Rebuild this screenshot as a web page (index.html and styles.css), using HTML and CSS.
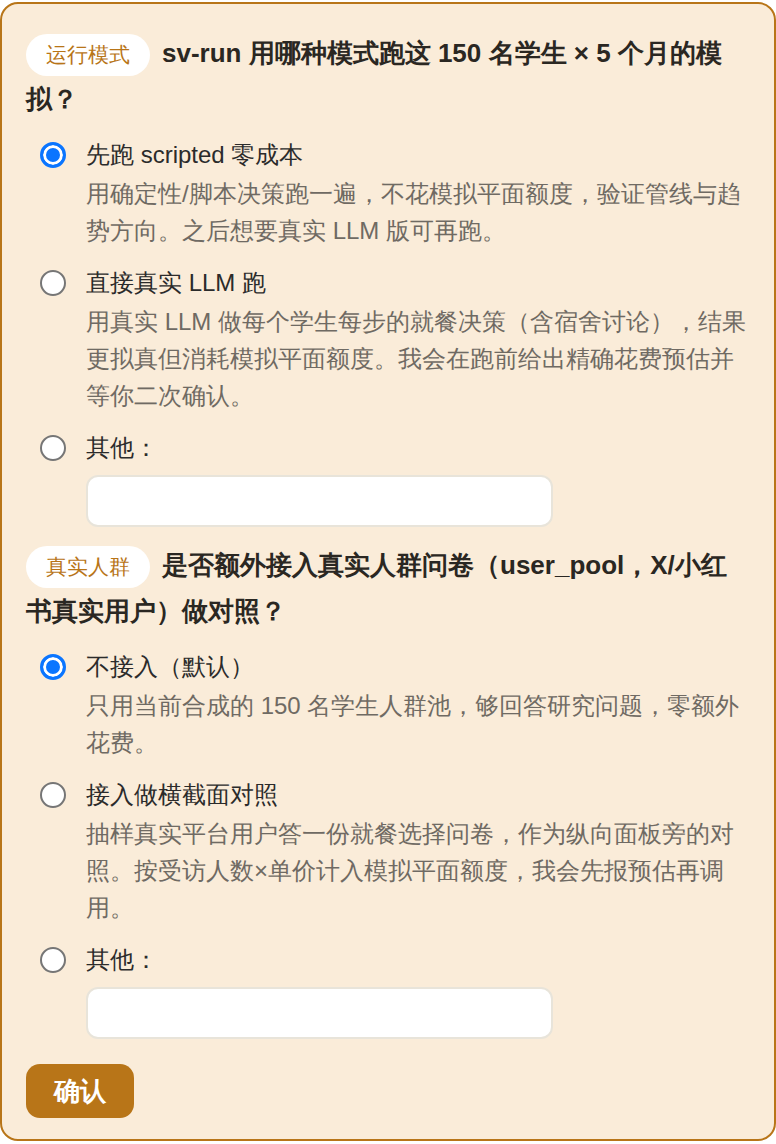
FILE: index.html
```html
<!DOCTYPE html>
<html>
<head>
    <meta charset="UTF-8">
    <meta name="viewport" content="width=device-width, initial-scale=1.0">
    <title>运行确认</title>
    <link rel="stylesheet" href="styles.css">
</head>
<body>

<form class="card">
    <div class="question">
        <h2 class="q-title"><span class="tag">运行模式</span>sv-run 用哪种模式跑这 150 名学生 × 5 个月的模拟？</h2>

        <label class="option">
            <input type="radio" name="mode" value="scripted" checked>
            <span class="opt-body">
                <span class="opt-label">先跑 scripted 零成本</span>
                <span class="opt-desc">用确定性/脚本决策跑一遍，不花模拟平面额度，验证管线与趋势方向。之后想要真实 LLM 版可再跑。</span>
            </span>
        </label>

        <label class="option">
            <input type="radio" name="mode" value="llm">
            <span class="opt-body">
                <span class="opt-label">直接真实 LLM 跑</span>
                <span class="opt-desc">用真实 LLM 做每个学生每步的就餐决策（含宿舍讨论），结果更拟真但消耗模拟平面额度。我会在跑前给出精确花费预估并等你二次确认。</span>
            </span>
        </label>

        <label class="option">
            <input type="radio" name="mode" value="other">
            <span class="opt-body">
                <span class="opt-label">其他：</span>
                <input type="text" class="other-input">
            </span>
        </label>
    </div>

    <div class="question">
        <h2 class="q-title"><span class="tag">真实人群</span>是否额外接入真实人群问卷（user_pool，X/小红书真实用户）做对照？</h2>

        <label class="option">
            <input type="radio" name="pool" value="none" checked>
            <span class="opt-body">
                <span class="opt-label">不接入（默认）</span>
                <span class="opt-desc">只用当前合成的 150 名学生人群池，够回答研究问题，零额外花费。</span>
            </span>
        </label>

        <label class="option">
            <input type="radio" name="pool" value="cross">
            <span class="opt-body">
                <span class="opt-label">接入做横截面对照</span>
                <span class="opt-desc">抽样真实平台用户答一份就餐选择问卷，作为纵向面板旁的对照。按受访人数×单价计入模拟平面额度，我会先报预估再调用。</span>
            </span>
        </label>

        <label class="option">
            <input type="radio" name="pool" value="other">
            <span class="opt-body">
                <span class="opt-label">其他：</span>
                <input type="text" class="other-input">
            </span>
        </label>
    </div>

    <button type="button" class="confirm">确认</button>
</form>

</body>
</html>
```

FILE: styles.css
```css
body {
    font-family: "Liberation Sans", sans-serif;
    margin: 0;
    padding: 2px 0 0;
    background: #fff;
}
.card {
    background: #faecd9;
    border: 2px solid #b87518;
    border-radius: 18px;
    padding: 26px 24px 20px;
    height: 1139px;
    box-sizing: border-box;
}
.q-title {
    font-size: 26px;
    font-weight: bold;
    color: #2a2722;
    line-height: 46px;
    margin: 0 0 15px;
}
.tag {
    display: inline-block;
    background: #fff;
    color: #b87518;
    font-size: 21px;
    font-weight: normal;
    line-height: 26px;
    padding: 8px 20px;
    border-radius: 21px;
    margin-right: 12px;
}
.option {
    display: flex;
    align-items: flex-start;
    gap: 20px;
    padding-left: 14px;
    margin-bottom: 16px;
    cursor: pointer;
}
.option:last-child {
    margin-bottom: 15px;
}
.option input[type="radio"] {
    appearance: none;
    width: 26px;
    height: 26px;
    margin: 5px 0 0;
    border: 2px solid #767676;
    border-radius: 50%;
    background: #fff;
    flex-shrink: 0;
    box-sizing: border-box;
}
.option input[type="radio"]:checked {
    border: 3px solid #0a75ff;
    background: #0a75ff;
    box-shadow: inset 0 0 0 3px #fff;
}
.opt-body {
    display: flex;
    flex-direction: column;
    flex: 1;
}
.opt-label {
    font-size: 24px;
    line-height: 36px;
    color: #2b2b2b;
}
.opt-desc {
    font-size: 24px;
    line-height: 37px;
    color: #6f6a63;
    margin-top: 2px;
}
.other-input {
    width: 467px;
    height: 52px;
    box-sizing: border-box;
    margin-top: 9px;
    border: 2px solid #e8e4da;
    border-radius: 12px;
    background: #fff;
    font-size: 20px;
}
.confirm {
    display: block;
    margin-top: 25px;
    width: 108px;
    height: 54px;
    background: #b87518;
    color: #fff;
    font-family: "Liberation Sans", sans-serif;
    font-size: 26px;
    font-weight: bold;
    border: none;
    border-radius: 14px;
    cursor: pointer;
}
```
